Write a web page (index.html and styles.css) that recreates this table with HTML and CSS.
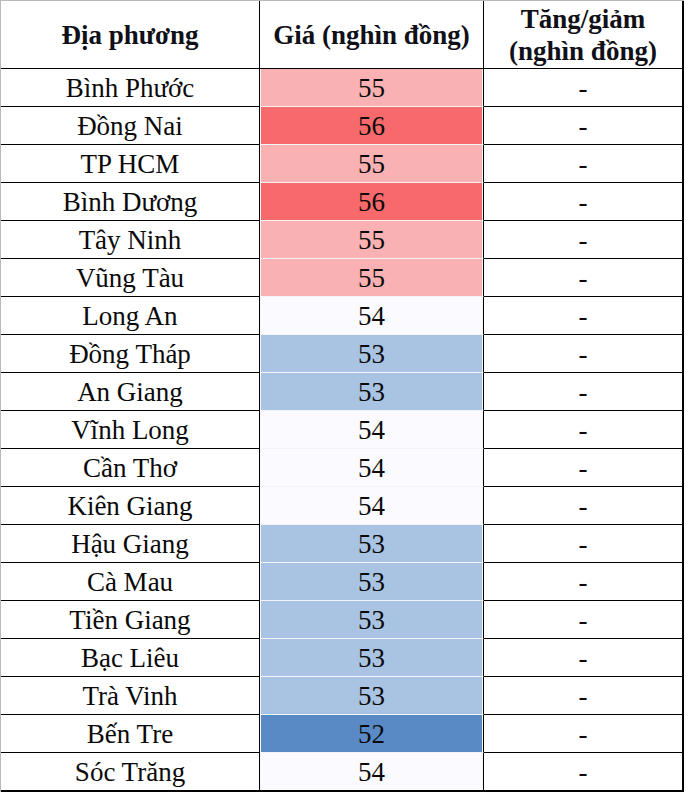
FILE: index.html
```html
<!DOCTYPE html>
<html lang="vi">
<head>
<meta charset="utf-8">
<title>Giá</title>
<link rel="stylesheet" href="styles.css">
</head>
<body>
<table class="sheet">
  <colgroup><col class="c1"><col class="c2"><col class="c3"></colgroup>
  <thead>
    <tr><th>Địa phương</th><th>Giá (nghìn đồng)</th><th>Tăng/giảm<br>(nghìn đồng)</th></tr>
  </thead>
  <tbody>
    <tr><td>Bình Phước</td><td class="v p55">55</td><td>-</td></tr>
    <tr><td>Đồng Nai</td><td class="v p56">56</td><td>-</td></tr>
    <tr><td>TP HCM</td><td class="v p55">55</td><td>-</td></tr>
    <tr><td>Bình Dương</td><td class="v p56">56</td><td>-</td></tr>
    <tr><td>Tây Ninh</td><td class="v p55">55</td><td>-</td></tr>
    <tr><td>Vũng Tàu</td><td class="v p55">55</td><td>-</td></tr>
    <tr><td>Long An</td><td class="v p54">54</td><td>-</td></tr>
    <tr><td>Đồng Tháp</td><td class="v p53">53</td><td>-</td></tr>
    <tr><td>An Giang</td><td class="v p53">53</td><td>-</td></tr>
    <tr><td>Vĩnh Long</td><td class="v p54">54</td><td>-</td></tr>
    <tr><td>Cần Thơ</td><td class="v p54">54</td><td>-</td></tr>
    <tr><td>Kiên Giang</td><td class="v p54">54</td><td>-</td></tr>
    <tr><td>Hậu Giang</td><td class="v p53">53</td><td>-</td></tr>
    <tr><td>Cà Mau</td><td class="v p53">53</td><td>-</td></tr>
    <tr><td>Tiền Giang</td><td class="v p53">53</td><td>-</td></tr>
    <tr><td>Bạc Liêu</td><td class="v p53">53</td><td>-</td></tr>
    <tr><td>Trà Vinh</td><td class="v p53">53</td><td>-</td></tr>
    <tr><td>Bến Tre</td><td class="v p52">52</td><td>-</td></tr>
    <tr class="last"><td>Sóc Trăng</td><td class="v p54">54</td><td>-</td></tr>
  </tbody>
</table>
</body>
</html>
```
FILE: styles.css
```css
html, body {
  margin: 0;
  padding: 0;
  background: #fff;
}
.sheet {
  border-collapse: separate;
  border-spacing: 0;
  table-layout: fixed;
  width: 683px;
  border-top: 1px solid #b9b9b9;
  border-left: 1px solid #b9b9b9;
  font-family: "Liberation Serif", "Times New Roman", serif;
  color: #0a0a0a;
}
.c1 { width: 259px; }
.c2 { width: 224px; }
.c3 { width: 200px; }
.sheet th,
.sheet td {
  padding: 0;
  text-align: center;
  vertical-align: middle;
  border-right: 1px solid #000;
  border-bottom: 1px solid #000;
}
.sheet th {
  height: 67px;
  font-size: 27px;
  font-weight: bold;
  line-height: 32px;
  color: #101018;
}
.sheet td {
  height: 37px;
  font-size: 27px;
  line-height: 30px;
}
.sheet th:last-child,
.sheet td:last-child {
  border-right: 2px solid #000;
}
.sheet td.v {
  border-bottom-color: #f3f3f3;
  box-shadow: inset 1px 0 #f6f6f6, inset -1px 0 #f6f6f6;
}
.sheet tr.last td {
  border-bottom: 2px solid #000;
}
.p56 { background: #f8696b; }
.p55 { background: #f9b1b3; }
.p54 { background: #fbfbff; }
.p53 { background: #a9c3e3; }
.p52 { background: #5a8ac6; }
```
